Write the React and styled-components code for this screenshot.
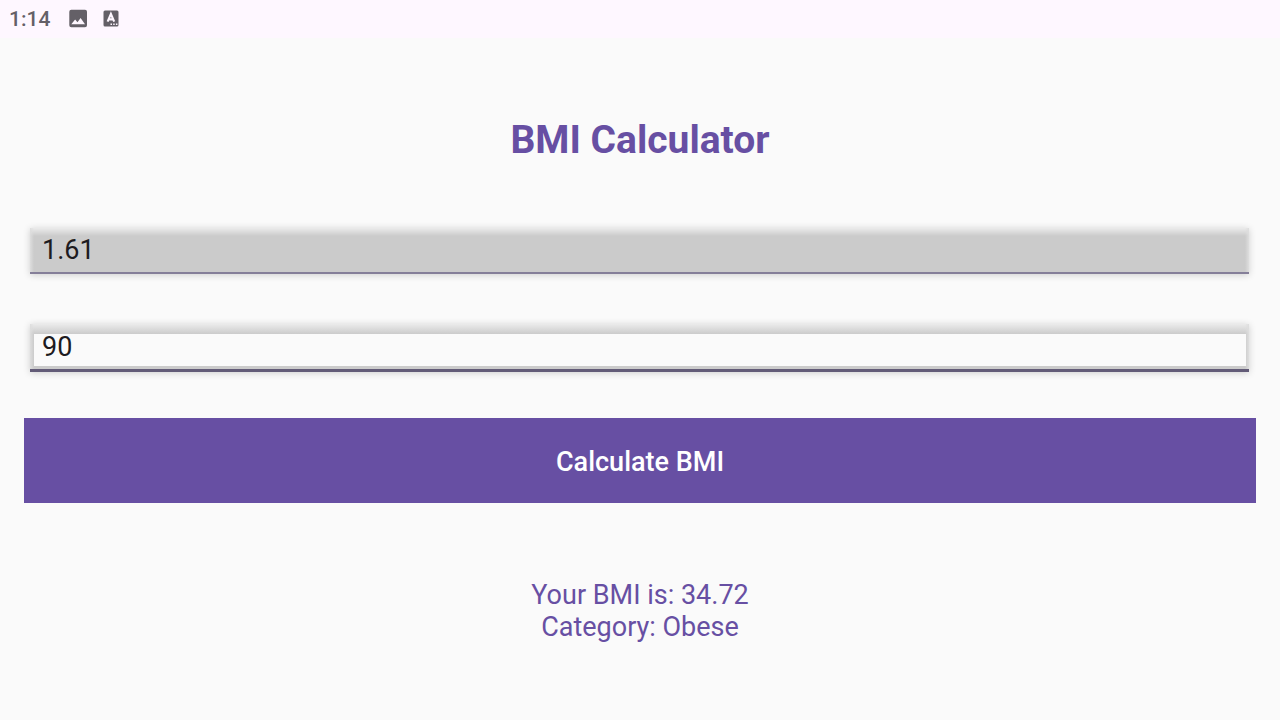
import React, { useState } from "react";
import styled, { createGlobalStyle } from "styled-components";

const GlobalStyle = createGlobalStyle`
  *, *::before, *::after { box-sizing: border-box; }
  body {
    margin: 0;
    background: #fafafa;
    font-family: Roboto, "Liberation Sans", sans-serif;
  }
`;

const StatusBar = styled.header`
  display: flex;
  align-items: center;
  height: 38px;
  padding: 0 9px;
  background: #fef7ff;
  color: #646067;
`;

const Clock = styled.time`
  font-size: 21px;
  line-height: 24px;
  font-weight: 500;
  margin-right: 18px;
`;

const StatusIcon = styled.svg`
  display: block;
  width: 20px;
  height: 20px;
  margin-right: 14px;
`;

const Form = styled.form`
  display: flex;
  flex-direction: column;
  padding: 78px 24px 24px;
`;

const Title = styled.h1`
  margin: 0 0 64px;
  font-size: 39px;
  line-height: 48px;
  font-weight: 700;
  text-align: center;
  color: #674fa3;
`;

const Field = styled.input`
  display: block;
  height: 46px;
  margin: 0 7px 50px 6px;
  border: 0;
  border-radius: 0;
  outline: 0;
  font: 400 27px/32px Roboto, "Liberation Sans", sans-serif;
  color: #1d1b20;
  box-shadow: 0 1px 7px rgba(0, 0, 0, 0.18);
  padding: 0 12px;
  border-bottom: 2px solid #857f99;
  background:
    linear-gradient(90deg, #dedede, rgba(203, 203, 203, 0) 4px, rgba(203, 203, 203, 0) calc(100% - 4px), #dedede),
    linear-gradient(#ebebeb, #cbcbcb 8px);

  &[data-active="true"] {
    height: 48px;
    margin-bottom: 46px;
    padding: 1px 12px 0;
    border-bottom: 3px solid #625b77;
    background:
      linear-gradient(#fafafa, #fafafa) 4px 10px / calc(100% - 7px) 32px no-repeat,
      linear-gradient(90deg, #dedede, rgba(203, 203, 203, 0) 4px, rgba(203, 203, 203, 0) calc(100% - 4px), #dedede),
      linear-gradient(#ebebeb, #cbcbcb 10px);
  }
`;

const Button = styled.button`
  height: 85px;
  padding: 2px 0 0;
  border: 0;
  background: #674fa3;
  color: #fff;
  font: 500 27px/32px Roboto, "Liberation Sans", sans-serif;
`;

const Result = styled.output`
  display: block;
  margin-top: 76px;
  font-size: 27px;
  line-height: 32px;
  text-align: center;
  color: #674fa3;
`;

const categoryOf = (bmi) =>
  bmi < 18.5 ? "Underweight" : bmi < 25 ? "Normal" : bmi < 30 ? "Overweight" : "Obese";

export default function App() {
  const [height, setHeight] = useState("1.61");
  const [weight, setWeight] = useState("90");
  const [bmi, setBmi] = useState(90 / (1.61 * 1.61));

  const calculate = (event) => {
    event.preventDefault();
    setBmi(Number(weight) / Number(height) ** 2);
  };

  return (
    <>
      <GlobalStyle />
      <StatusBar>
        <Clock>1:14</Clock>
        <StatusIcon viewBox="0 0 20 20" aria-hidden="true">
          <path
            fill="currentColor"
            fillRule="evenodd"
            d="M3.300 0.800h13.700a2 2 0 0 1 2 2v13.400a2 2 0 0 1-2 2H3.300a2 2 0 0 1-2-2V2.800a2 2 0 0 1 2-2zM3.300 15.200h13.700l-4.400-6.200-3.100 4.200-2.400-2.700z"
          />
        </StatusIcon>
        <StatusIcon viewBox="0 0 20 20" aria-hidden="true">
          <rect x="1.500" y="1.500" width="15" height="16" rx="1.500" fill="currentColor" />
          <path d="M5.600 12.700L8.900 5l3.300 7.700M6.800 10.400h4.200" fill="none" stroke="#fef7ff" strokeWidth="2.100" />
          <path d="M8.500 14.500H10V16H8.500zM11.200 14.500h1.500V16h-1.500zM13.900 14.500h1.500V16h-1.500z" fill="#fef7ff" />
        </StatusIcon>
      </StatusBar>
      <Form onSubmit={calculate}>
        <Title>BMI Calculator</Title>
        <Field
          aria-label="Height in metres"
          inputMode="decimal"
          value={height}
          onChange={(e) => setHeight(e.target.value)}
        />
        <Field
          aria-label="Weight in kilograms"
          inputMode="decimal"
          data-active="true"
          value={weight}
          onChange={(e) => setWeight(e.target.value)}
        />
        <Button type="submit">Calculate BMI</Button>
        <Result>
          Your BMI is: {bmi.toFixed(2)}
          <br />
          Category: {categoryOf(bmi)}
        </Result>
      </Form>
    </>
  );
}
